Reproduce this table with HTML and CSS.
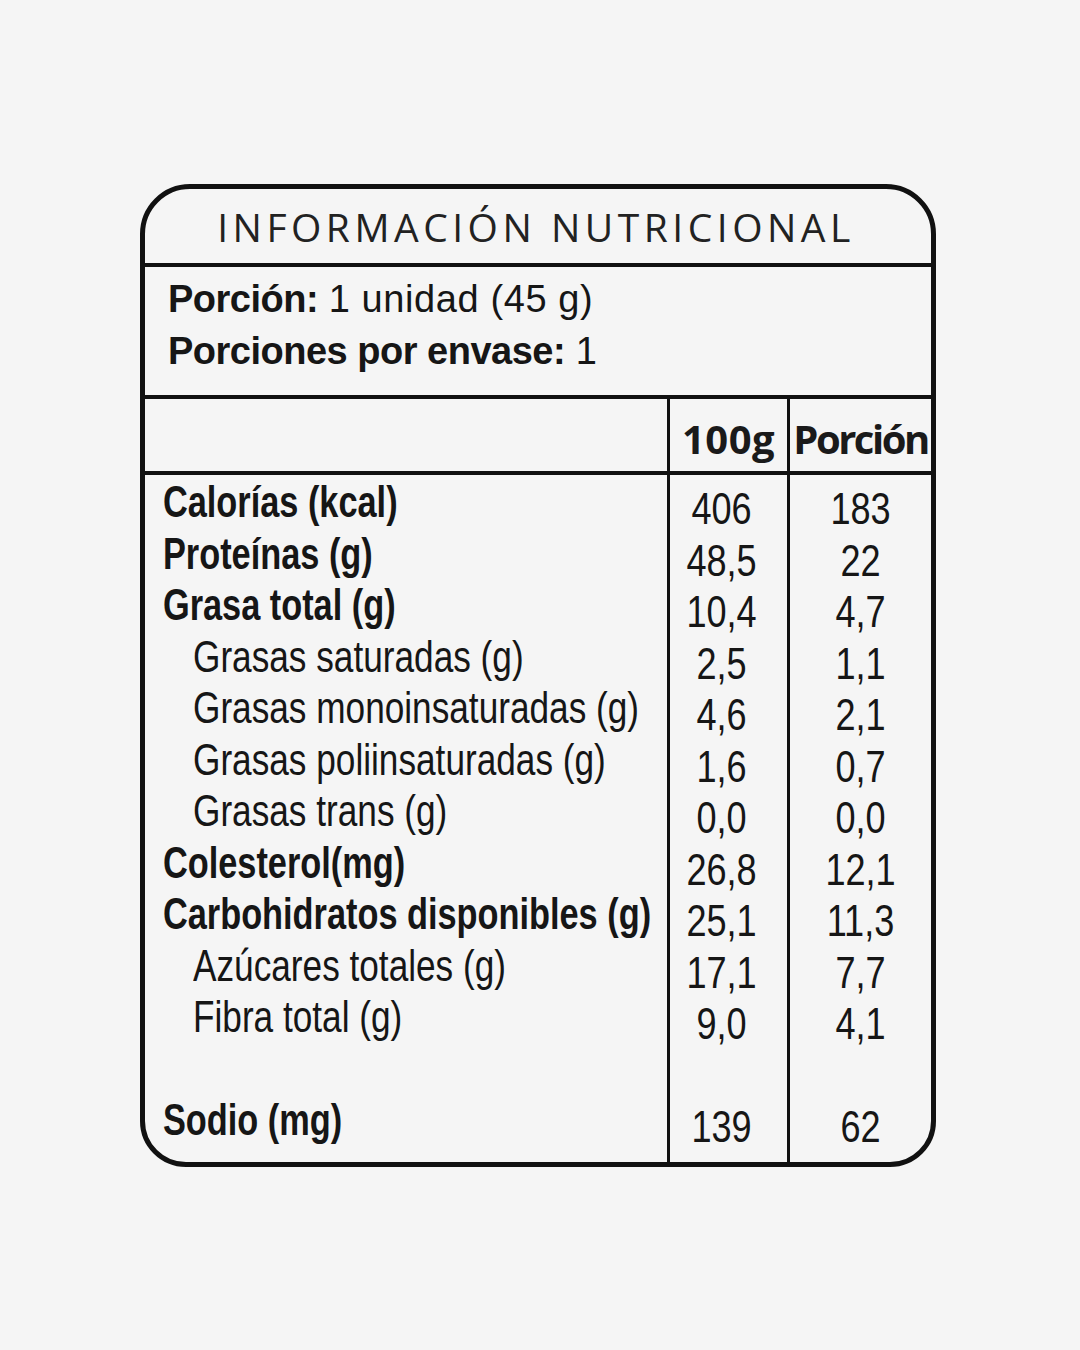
FILE: index.html
```html
<!DOCTYPE html>
<html lang="es">
<head>
<meta charset="utf-8">
<title>Información nutricional</title>
<link rel="stylesheet" href="styles.css">
</head>
<body>
<main class="page">
  <section class="panel">
    <h1 class="title">INFORMACIÓN NUTRICIONAL</h1>
    <div class="serving">
      <p><b>Porción:</b> <span>1 unidad (45 g)</span></p>
      <p><b>Porciones por envase:</b> <span>1</span></p>
    </div>
    <div class="facts">
      <div class="grid head">
        <div class="c0"></div>
        <div class="c1 hcell h100">100g</div>
        <div class="c2 hcell hpor">Porción</div>
      </div>
      <div class="grid body">
        <div class="c0 names">
          <div class="row main">Calorías (kcal)</div>
          <div class="row main">Proteínas (g)</div>
          <div class="row main">Grasa total (g)</div>
          <div class="row sub">Grasas saturadas (g)</div>
          <div class="row sub">Grasas monoinsaturadas (g)</div>
          <div class="row sub">Grasas poliinsaturadas (g)</div>
          <div class="row sub">Grasas trans (g)</div>
          <div class="row main">Colesterol(mg)</div>
          <div class="row main">Carbohidratos disponibles (g)</div>
          <div class="row sub">Azúcares totales (g)</div>
          <div class="row sub">Fibra total (g)</div>
          <div class="row"></div>
          <div class="row main">Sodio (mg)</div>
        </div>
        <div class="c1 vals v100">
          <div class="row">406</div>
          <div class="row">48,5</div>
          <div class="row">10,4</div>
          <div class="row">2,5</div>
          <div class="row">4,6</div>
          <div class="row">1,6</div>
          <div class="row">0,0</div>
          <div class="row">26,8</div>
          <div class="row">25,1</div>
          <div class="row">17,1</div>
          <div class="row">9,0</div>
          <div class="row"></div>
          <div class="row">139</div>
        </div>
        <div class="c2 vals">
          <div class="row">183</div>
          <div class="row">22</div>
          <div class="row">4,7</div>
          <div class="row">1,1</div>
          <div class="row">2,1</div>
          <div class="row">0,7</div>
          <div class="row">0,0</div>
          <div class="row">12,1</div>
          <div class="row">11,3</div>
          <div class="row">7,7</div>
          <div class="row">4,1</div>
          <div class="row"></div>
          <div class="row">62</div>
        </div>
      </div>
    </div>
  </section>
</main>
</body>
</html>
```

FILE: styles.css
```css
html, body {
  margin: 0;
  padding: 0;
  background: #f5f5f5;
}

.page {
  width: 1080px;
  height: 1350px;
  padding: 184px 0 0 140px;
  box-sizing: border-box;
}

.panel {
  width: 796px;
  height: 983px;
  box-sizing: border-box;
  border: 5px solid #111;
  border-radius: 50px 50px 46px 46px;
  display: flex;
  flex-direction: column;
  color: #161616;
  overflow: hidden;
}

.title {
  margin: 0;
  height: 78px;
  flex: none;
  box-sizing: border-box;
  border-bottom: 4px solid #111;
  font-family: "Open Sans", sans-serif;
  font-weight: 400;
  font-size: 39px;
  letter-spacing: 4.5px;
  line-height: 75px;
  text-align: center;
  padding-right: 4px;
  color: #222;
}

.serving {
  height: 132px;
  flex: none;
  box-sizing: border-box;
  border-bottom: 4px solid #111;
  padding: 6px 0 0 23px;
  font-family: "Liberation Sans", sans-serif;
  font-size: 38px;
  line-height: 52px;
}

.serving p {
  margin: 0;
}

.serving b {
  font-weight: 700;
  letter-spacing: -0.5px;
}

.serving span {
  letter-spacing: 0.6px;
}

.facts {
  flex: 1;
  display: flex;
  flex-direction: column;
}

.grid {
  display: grid;
  grid-template-columns: 522px 123px 1fr;
}

.c1 {
  border-left: 3px solid #111;
  border-right: 3px solid #111;
}

.head {
  height: 76px;
  flex: none;
  box-sizing: border-box;
  border-bottom: 4px solid #111;
}

.hcell {
  font-family: "Open Sans", sans-serif;
  font-weight: 700;
  font-size: 40px;
  line-height: 68px;
  padding-top: 6px;
  text-align: center;
  color: #1a1a1a;
  white-space: nowrap;
}

.h100 {
  letter-spacing: 0.5px;
}

.hpor {
  letter-spacing: -2.5px;
}

.body {
  flex: 1;
}

.names, .vals {
  font-family: "Liberation Sans", sans-serif;
  font-size: 44px;
}

.names {
  padding-top: 1px;
}

.row {
  height: 51.5px;
  line-height: 51.5px;
  white-space: nowrap;
}

.main {
  font-weight: 700;
  padding-left: 23px;
  transform: scaleX(0.78);
  transform-origin: 0 50%;
}

.sub {
  font-weight: 400;
  padding-left: 60px;
  transform: scaleX(0.8);
  transform-origin: 0 50%;
}

.vals {
  text-align: center;
  padding-top: 8px;
}

.vals .row {
  transform: scaleX(0.82);
  transform-origin: 50% 50%;
}

.v100 {
  padding-right: 14px;
}
```
